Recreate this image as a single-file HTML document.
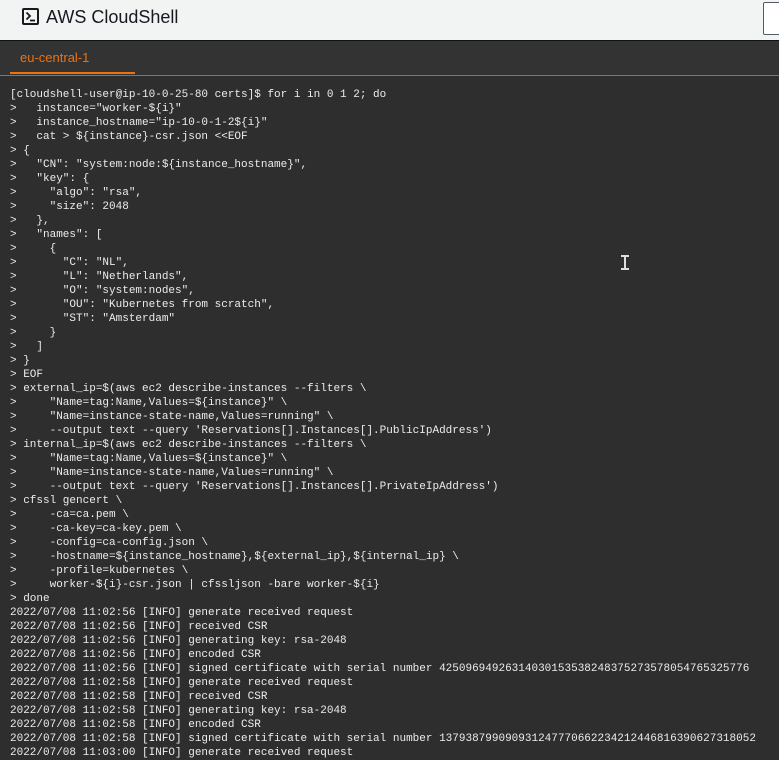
<!DOCTYPE html>
<html><head><meta charset="utf-8">
<style>
html,body{margin:0;padding:0;width:779px;height:757px;overflow:hidden;background:#2e2e2e;}
#top{position:absolute;left:0;top:0;width:779px;height:40px;background:#f2f3f3;border-bottom:1px solid #111;}
#title{position:absolute;left:46px;top:7px;font:18px "Liberation Sans",sans-serif;color:#16191f;}
#icon{position:absolute;left:22px;top:8px;width:13px;height:13px;border:2px solid #16191f;border-radius:2px;}
#box{position:absolute;left:763px;top:2px;width:20px;height:31px;background:#fff;border:1px solid #545b64;border-radius:2px;}
#tabs{position:absolute;left:0;top:41px;width:779px;height:34px;background:#333;border-bottom:1px solid #777;}
#tab{position:absolute;left:20px;top:9px;font:13px "Liberation Sans",sans-serif;color:#ec7211;}
#ul{position:absolute;left:10px;top:31px;width:125px;height:2px;background:#ec7211;}
#term{position:absolute;left:10px;top:88px;margin:0;font:11px/14px "Liberation Mono",monospace;color:#ececec;white-space:pre;}
#cur{position:absolute;left:624px;top:255px;width:2px;height:15px;background:#ddd;}
#cur:before,#cur:after{content:"";position:absolute;left:-3px;width:8px;height:2px;background:#ddd;}
#cur:before{top:0}#cur:after{bottom:0}
</style></head><body>
<div id="top">
<div id="icon"><svg width="13" height="13" viewBox="0 0 13 13" style="position:absolute;left:0;top:0"><path d="M2.5 2.5 L6 6 L2.5 9.5" fill="none" stroke="#16191f" stroke-width="1.8"/><path d="M6 10.5 H11" stroke="#16191f" stroke-width="1.8"/></svg></div>
<div id="title">AWS CloudShell</div>
<div id="box"></div>
</div>
<div id="tabs"><div id="tab">eu-central-1</div><div id="ul"></div></div>
<div id="cur"></div>
<pre id="term">[cloudshell-user@ip-10-0-25-80 certs]$ for i in 0 1 2; do
&gt;   instance="worker-${i}"
&gt;   instance_hostname="ip-10-0-1-2${i}"
&gt;   cat &gt; ${instance}-csr.json &lt;&lt;EOF
&gt; {
&gt;   "CN": "system:node:${instance_hostname}",
&gt;   "key": {
&gt;     "algo": "rsa",
&gt;     "size": 2048
&gt;   },
&gt;   "names": [
&gt;     {
&gt;       "C": "NL",
&gt;       "L": "Netherlands",
&gt;       "O": "system:nodes",
&gt;       "OU": "Kubernetes from scratch",
&gt;       "ST": "Amsterdam"
&gt;     }
&gt;   ]
&gt; }
&gt; EOF
&gt; external_ip=$(aws ec2 describe-instances --filters \
&gt;     "Name=tag:Name,Values=${instance}" \
&gt;     "Name=instance-state-name,Values=running" \
&gt;     --output text --query 'Reservations[].Instances[].PublicIpAddress')
&gt; internal_ip=$(aws ec2 describe-instances --filters \
&gt;     "Name=tag:Name,Values=${instance}" \
&gt;     "Name=instance-state-name,Values=running" \
&gt;     --output text --query 'Reservations[].Instances[].PrivateIpAddress')
&gt; cfssl gencert \
&gt;     -ca=ca.pem \
&gt;     -ca-key=ca-key.pem \
&gt;     -config=ca-config.json \
&gt;     -hostname=${instance_hostname},${external_ip},${internal_ip} \
&gt;     -profile=kubernetes \
&gt;     worker-${i}-csr.json | cfssljson -bare worker-${i}
&gt; done
2022/07/08 11:02:56 [INFO] generate received request
2022/07/08 11:02:56 [INFO] received CSR
2022/07/08 11:02:56 [INFO] generating key: rsa-2048
2022/07/08 11:02:56 [INFO] encoded CSR
2022/07/08 11:02:56 [INFO] signed certificate with serial number 425096949263140301535382483752735780547653257​76
2022/07/08 11:02:58 [INFO] generate received request
2022/07/08 11:02:58 [INFO] received CSR
2022/07/08 11:02:58 [INFO] generating key: rsa-2048
2022/07/08 11:02:58 [INFO] encoded CSR
2022/07/08 11:02:58 [INFO] signed certificate with serial number 137938799090931247770662234212446816390627318052
2022/07/08 11:03:00 [INFO] generate received request</pre>
</body></html>
